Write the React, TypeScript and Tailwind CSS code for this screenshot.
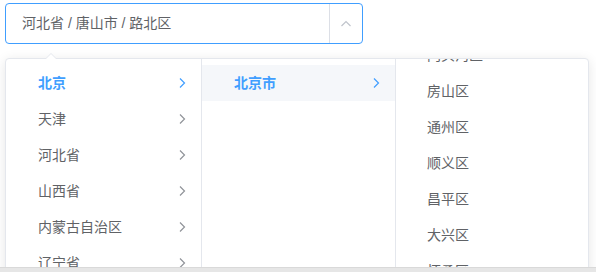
import React from "react";

const col1 = ["北京", "天津", "河北省", "山西省", "内蒙古自治区", "辽宁省"];
const col3 = [
  "东城区",
  "西城区",
  "朝阳区",
  "丰台区",
  "石景山区",
  "海淀区",
  "门头沟区",
  "房山区",
  "通州区",
  "顺义区",
  "昌平区",
  "大兴区",
  "怀柔区",
  "平谷区",
];

function Chevron({ color }: { color: string }) {
  return (
    <svg width="12" height="12" viewBox="0 0 12 12" fill="none">
      <path d="M4 1.5 L8.5 6 L4 10.5" stroke={color} strokeWidth="1.2" />
    </svg>
  );
}

export default function App() {
  return (
    <div
      className="w-[596px] h-[272px] bg-white overflow-hidden flex flex-col"
      style={{ fontFamily: '"Liberation Sans","Noto Sans CJK SC",sans-serif' }}
    >
      <div className="pt-[3px] pl-[5px]">
        <div className="w-[358px] h-[41px] border border-[#409eff] rounded-[4px] flex items-center">
          <div className="flex-1 pl-[16px] text-[14px] text-[#606266]">河北省 / 唐山市 / 路北区</div>
          <div className="w-[33px] h-full border-l border-[#dcdfe6] flex items-center justify-center">
            <svg width="12" height="12" viewBox="0 0 12 12" fill="none">
              <path d="M1.5 8 L6 3.5 L10.5 8" stroke="#c0c4cc" strokeWidth="1.2" />
            </svg>
          </div>
        </div>
      </div>
      <div className="h-[223px] overflow-hidden pt-[8px] px-[5px] mt-[6px]">
        <div className="relative w-[584px] h-[260px] bg-white border border-[#e4e7ed] rounded-[4px] shadow-[0_2px_12px_rgba(0,0,0,0.1)] flex">
          <div className="absolute left-[39px] -top-[6px] w-0 h-0 border-l-[6px] border-r-[6px] border-b-[6px] border-l-transparent border-r-transparent border-b-[#e4e7ed]" />
          <div className="absolute left-[40px] -top-[5px] w-0 h-0 border-l-[5px] border-r-[5px] border-b-[5px] border-l-transparent border-r-transparent border-b-white" />
          <div className="w-[196px] border-r border-[#e4e7ed] pt-[6px]">
            {col1.map((t, i) => (
              <div key={t} className="h-[36px] flex items-center pl-[32px] pr-[13px]">
                <span
                  className={
                    i === 0
                      ? "flex-1 text-[14px] text-[#409eff] font-bold"
                      : "flex-1 text-[14px] text-[#606266]"
                  }
                >
                  {t}
                </span>
                <Chevron color={i === 0 ? "#409eff" : "#909399"} />
              </div>
            ))}
          </div>
          <div className="w-[194px] border-r border-[#e4e7ed] pt-[6px]">
            <div className="h-[36px] flex items-center pl-[32px] pr-[13px] bg-[#f5f7fa]">
              <span className="flex-1 text-[14px] text-[#409eff] font-bold">北京市</span>
              <Chevron color="#409eff" />
            </div>
          </div>
          <div className="flex-1 overflow-hidden pt-[6px]">
            <div className="-mt-[244px]">
              {col3.map((t) => (
                <div key={t} className="h-[36px] flex items-center pl-[31px] text-[14px] text-[#606266]">
                  {t}
                </div>
              ))}
            </div>
          </div>
        </div>
      </div>
      <div className="h-[5px] bg-[#e6e6e6] border-t border-[#d9d9d9]" />
    </div>
  );
}
